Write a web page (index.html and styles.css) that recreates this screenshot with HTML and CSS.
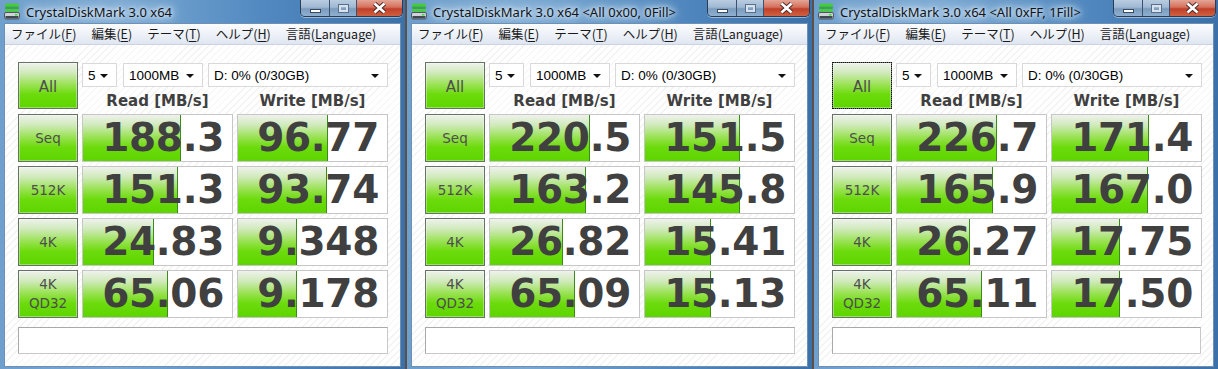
FILE: index.html
```html
<!DOCTYPE html>
<html lang="ja">
<head>
  <meta charset="UTF-8" />
  <title>CrystalDiskMark 3.0 x64</title>
  <link rel="stylesheet" href="styles.css">
</head>
<body>
  <div class="desk">

    <!-- window 1 : random data -->
    <div class="win">
      <div class="titlebar">
        <svg class="app-icon" width="17" height="17" viewBox="0 0 17 17">
          <rect x="1" y="0.5" width="14" height="2.4" rx="1" fill="#45cc3a"/>
          <rect x="1" y="3.5" width="14" height="2.4" rx="1" fill="#2fae2a"/>
          <rect x="1" y="6.5" width="14" height="2.2" rx="1" fill="#45cc3a"/>
          <rect x="0.5" y="9.5" width="15" height="6.5" rx="1.5" fill="#cfd3d8" stroke="#4d555e"/>
          <rect x="1.5" y="13" width="13" height="2.5" fill="#3f4750"/>
          <rect x="11" y="11" width="2.5" height="1.5" fill="#33dd33"/>
        </svg>
        <span class="title">CrystalDiskMark 3.0 x64</span>
        <div class="caps">
          <span class="cap min"><i></i></span>
          <span class="cap max"><i></i></span>
          <span class="cap close">
            <svg width="15" height="12" viewBox="0 0 15 12"><path d="M2.5 1.5 L12.5 10.5 M12.5 1.5 L2.5 10.5" stroke="#4a2424" stroke-width="4.4"/><path d="M2.5 1.5 L12.5 10.5 M12.5 1.5 L2.5 10.5" stroke="#fff" stroke-width="2.6"/></svg>
          </span>
        </div>
      </div>
      <div class="client">
        <div class="menubar">
          <span>ファイル(<u>F</u>)</span>
          <span>編集(<u>E</u>)</span>
          <span>テーマ(<u>T</u>)</span>
          <span>ヘルプ(<u>H</u>)</span>
          <span>言語(<u>L</u>anguage)</span>
        </div>
        <div class="panel">
          <div class="top">
            <div class="tbtn all">All</div>
            <div class="selects">
              <div class="sel s-count">5</div>
              <div class="sel s-size">1000MB</div>
              <div class="sel s-drive">D: 0% (0/30GB)</div>
            </div>
            <div class="hdr">Read [MB/s]</div>
            <div class="hdr">Write [MB/s]</div>
          </div>
          <div class="rows">
            <div class="tbtn">Seq</div>
            <div class="val" style="--w:98px">188.3</div>
            <div class="val" style="--w:90px">96.77</div>

            <div class="tbtn">512K</div>
            <div class="val" style="--w:95px">151.3</div>
            <div class="val" style="--w:89px">93.74</div>

            <div class="tbtn">4K</div>
            <div class="val" style="--w:71px">24.83</div>
            <div class="val" style="--w:59px">9.348</div>

            <div class="tbtn two">4K<br>QD32</div>
            <div class="val" style="--w:85px">65.06</div>
            <div class="val" style="--w:59px">9.178</div>
          </div>
          <div class="comment"></div>
        </div>
      </div>
    </div>

    <!-- window 2 : 0x00 fill -->
    <div class="win">
      <div class="titlebar">
        <svg class="app-icon" width="17" height="17" viewBox="0 0 17 17">
          <rect x="1" y="0.5" width="14" height="2.4" rx="1" fill="#45cc3a"/>
          <rect x="1" y="3.5" width="14" height="2.4" rx="1" fill="#2fae2a"/>
          <rect x="1" y="6.5" width="14" height="2.2" rx="1" fill="#45cc3a"/>
          <rect x="0.5" y="9.5" width="15" height="6.5" rx="1.5" fill="#cfd3d8" stroke="#4d555e"/>
          <rect x="1.5" y="13" width="13" height="2.5" fill="#3f4750"/>
          <rect x="11" y="11" width="2.5" height="1.5" fill="#33dd33"/>
        </svg>
        <span class="title">CrystalDiskMark 3.0 x64 &lt;All 0x00, 0Fill&gt;</span>
        <div class="caps">
          <span class="cap min"><i></i></span>
          <span class="cap max"><i></i></span>
          <span class="cap close">
            <svg width="15" height="12" viewBox="0 0 15 12"><path d="M2.5 1.5 L12.5 10.5 M12.5 1.5 L2.5 10.5" stroke="#4a2424" stroke-width="4.4"/><path d="M2.5 1.5 L12.5 10.5 M12.5 1.5 L2.5 10.5" stroke="#fff" stroke-width="2.6"/></svg>
          </span>
        </div>
      </div>
      <div class="client">
        <div class="menubar">
          <span>ファイル(<u>F</u>)</span>
          <span>編集(<u>E</u>)</span>
          <span>テーマ(<u>T</u>)</span>
          <span>ヘルプ(<u>H</u>)</span>
          <span>言語(<u>L</u>anguage)</span>
        </div>
        <div class="panel">
          <div class="top">
            <div class="tbtn all">All</div>
            <div class="selects">
              <div class="sel s-count">5</div>
              <div class="sel s-size">1000MB</div>
              <div class="sel s-drive">D: 0% (0/30GB)</div>
            </div>
            <div class="hdr">Read [MB/s]</div>
            <div class="hdr">Write [MB/s]</div>
          </div>
          <div class="rows">
            <div class="tbtn">Seq</div>
            <div class="val" style="--w:100px">220.5</div>
            <div class="val" style="--w:95px">151.5</div>

            <div class="tbtn">512K</div>
            <div class="val" style="--w:96px">163.2</div>
            <div class="val" style="--w:95px">145.8</div>

            <div class="tbtn">4K</div>
            <div class="val" style="--w:73px">26.82</div>
            <div class="val" style="--w:66px">15.41</div>

            <div class="tbtn two">4K<br>QD32</div>
            <div class="val" style="--w:85px">65.09</div>
            <div class="val" style="--w:66px">15.13</div>
          </div>
          <div class="comment"></div>
        </div>
      </div>
    </div>

    <!-- window 3 : 0xFF fill -->
    <div class="win">
      <div class="titlebar">
        <svg class="app-icon" width="17" height="17" viewBox="0 0 17 17">
          <rect x="1" y="0.5" width="14" height="2.4" rx="1" fill="#45cc3a"/>
          <rect x="1" y="3.5" width="14" height="2.4" rx="1" fill="#2fae2a"/>
          <rect x="1" y="6.5" width="14" height="2.2" rx="1" fill="#45cc3a"/>
          <rect x="0.5" y="9.5" width="15" height="6.5" rx="1.5" fill="#cfd3d8" stroke="#4d555e"/>
          <rect x="1.5" y="13" width="13" height="2.5" fill="#3f4750"/>
          <rect x="11" y="11" width="2.5" height="1.5" fill="#33dd33"/>
        </svg>
        <span class="title">CrystalDiskMark 3.0 x64 &lt;All 0xFF, 1Fill&gt;</span>
        <div class="caps">
          <span class="cap min"><i></i></span>
          <span class="cap max"><i></i></span>
          <span class="cap close">
            <svg width="15" height="12" viewBox="0 0 15 12"><path d="M2.5 1.5 L12.5 10.5 M12.5 1.5 L2.5 10.5" stroke="#4a2424" stroke-width="4.4"/><path d="M2.5 1.5 L12.5 10.5 M12.5 1.5 L2.5 10.5" stroke="#fff" stroke-width="2.6"/></svg>
          </span>
        </div>
      </div>
      <div class="client">
        <div class="menubar">
          <span>ファイル(<u>F</u>)</span>
          <span>編集(<u>E</u>)</span>
          <span>テーマ(<u>T</u>)</span>
          <span>ヘルプ(<u>H</u>)</span>
          <span>言語(<u>L</u>anguage)</span>
        </div>
        <div class="panel">
          <div class="top">
            <div class="tbtn all focus">All</div>
            <div class="selects">
              <div class="sel s-count">5</div>
              <div class="sel s-size">1000MB</div>
              <div class="sel s-drive">D: 0% (0/30GB)</div>
            </div>
            <div class="hdr">Read [MB/s]</div>
            <div class="hdr">Write [MB/s]</div>
          </div>
          <div class="rows">
            <div class="tbtn">Seq</div>
            <div class="val" style="--w:100px">226.7</div>
            <div class="val" style="--w:97px">171.4</div>

            <div class="tbtn">512K</div>
            <div class="val" style="--w:96px">165.9</div>
            <div class="val" style="--w:96px">167.0</div>

            <div class="tbtn">4K</div>
            <div class="val" style="--w:73px">26.27</div>
            <div class="val" style="--w:68px">17.75</div>

            <div class="tbtn two">4K<br>QD32</div>
            <div class="val" style="--w:85px">65.11</div>
            <div class="val" style="--w:68px">17.50</div>
          </div>
          <div class="comment"></div>
        </div>
      </div>
    </div>

  </div>
</body>
</html>
```

FILE: styles.css
```css
:root {
  --green: linear-gradient(to bottom, #eef2ec 0%, #d0eabb 22%, #9ae254 48%, #6cdb0c 70%, #5dd500 100%);
  --edge: #3d8a1c;
  --ink: #404040;
}

* {
  box-sizing: border-box;
}

body {
  margin: 0;
  background: #5d5046;
  font-family: "Noto Sans", "Noto Sans CJK JP", sans-serif;
}

.desk {
  display: flex;
  gap: 2px;
  width: 1218px;
  height: 369px;
  overflow: hidden;
}

.win {
  flex: none;
  width: 405px;
  height: 369px;
  padding: 0 4px 2px;
  background: linear-gradient(to right, #6e9fcd 0%, #79a8d3 30%, #5189c0 65%, #3c70a8 100%);
  display: flex;
  flex-direction: column;
}

.win:last-child {
  width: 404px;
}

/* title bar */

.titlebar {
  height: 23px;
  display: flex;
  align-items: center;
  flex: none;
}

.app-icon {
  flex: none;
  margin: 0 3px 1px 0;
}

.title {
  font-size: 13px;
  color: #101418;
  white-space: nowrap;
  padding: 0 2px;
  text-shadow: 0 0 4px #f0f6fb, 0 0 8px #e2edf7, 0 0 12px #d6e6f4, 0 0 16px #cbdff0;
}

.caps {
  align-self: flex-start;
  margin: 0 -2px 0 auto;
  display: flex;
  height: 17px;
  border: 1px solid #2b3d55;
  border-top: none;
  border-radius: 0 0 5px 5px;
  overflow: hidden;
  box-shadow: 0 1px 0 rgba(255, 255, 255, .45);
}

.cap {
  display: flex;
  align-items: center;
  justify-content: center;
  height: 100%;
  background: linear-gradient(to bottom, #b9cde0 0%, #9fb8d2 45%, #7c9cbd 55%, #8eb0d0 100%);
  border-right: 1px solid #3d5270;
}

.cap.min { width: 29px; }
.cap.max { width: 27px; }

.cap.close {
  width: 45px;
  border-right: none;
  background: linear-gradient(to bottom, #e4a596 0%, #d5705c 45%, #c0402a 55%, #cf6040 100%);
}

.cap.min i {
  display: block;
  width: 11px;
  height: 4px;
  margin-top: 6px;
  background: #fff;
  border: 1px solid #3a4a60;
}

.cap.max i {
  display: block;
  width: 11px;
  height: 9px;
  border: 1px solid #5a6f8a;
  box-shadow: inset 0 0 0 2px #d7e2ee;
}

/* client area */

.client {
  flex: 1;
  display: flex;
  flex-direction: column;
  border: 1px solid #6f90b6;
  background: #fff repeating-linear-gradient(135deg, #fff 0 4px, #f3f3f3 4px 5px);
}

.menubar {
  height: 21px;
  flex: none;
  display: flex;
  align-items: center;
  gap: 15px;
  padding: 0 0 1px 6px;
  font-family: "Noto Sans CJK JP", sans-serif;
  font-size: 12.5px;
  color: #1a1a1a;
  background: linear-gradient(to bottom, #fbfcfe 0%, #eef2f8 50%, #dfe6f1 100%);
  border-bottom: 1px solid #c9d3e2;
}

.menubar u {
  text-decoration-thickness: 1px;
  text-underline-offset: 2px;
}

.panel {
  padding: 17px 12px 0 13px;
}

.top {
  display: grid;
  grid-template-columns: 60px 151px 151px;
  grid-template-rows: 25px 22px;
  column-gap: 4px;
}

.top .all {
  grid-row: 1 / 3;
}

.selects {
  grid-column: 2 / 4;
  display: flex;
  padding-top: 1px;
}

.sel {
  position: relative;
  height: 24px;
  padding: 0 0 0 5px;
  display: flex;
  align-items: center;
  font-family: "Liberation Sans", sans-serif;
  font-size: 13.5px;
  color: #000;
  background: #fff;
  border: 1px solid #d9d9d9;
}

.sel::after {
  content: "";
  position: absolute;
  right: 8px;
  top: 10px;
  border-left: 4px solid transparent;
  border-right: 4px solid transparent;
  border-top: 4px solid #111;
}

.s-count { width: 35px; }
.s-size { width: 80px; margin-left: 6px; }
.s-drive { width: 180px; margin-left: 5px; }

.hdr {
  font-family: "DejaVu Sans", sans-serif;
  font-weight: bold;
  font-size: 15px;
  color: var(--ink);
  text-align: center;
  line-height: 18px;
  padding-top: 5px;
}

.rows {
  margin-top: 5px;
  display: grid;
  grid-template-columns: 60px 151px 151px;
  grid-auto-rows: 48px;
  gap: 4px;
}

.tbtn {
  display: flex;
  align-items: center;
  justify-content: center;
  text-align: center;
  font-family: "DejaVu Sans", sans-serif;
  font-size: 13.5px;
  line-height: 19px;
  color: #4e4e4e;
  background: var(--green);
  border: 1px solid #667266;
  box-shadow: inset 0 0 0 1px rgba(255, 255, 255, .35);
}

.tbtn.all {
  font-size: 15px;
  padding-top: 4px;
}

.tbtn.focus {
  outline: 1px dotted #111;
  outline-offset: -1px;
}

.val {
  border: 1px solid #c6c6c6;
  background:
    linear-gradient(var(--edge), var(--edge)) no-repeat calc(var(--w) - 1px) 0 / 1px 100%,
    var(--green) no-repeat 0 0 / var(--w) 100%,
    #fff;
  font-family: "DejaVu Sans", sans-serif;
  font-weight: bold;
  font-size: 39px;
  line-height: 46px;
  color: var(--ink);
  text-align: right;
  padding-right: 8px;
  letter-spacing: -0.3px;
}

.comment {
  margin-top: 9px;
  height: 27px;
  background: #fff;
  border: 1px solid #a9a9a9;
  border-right-color: #c8c8c8;
  border-bottom-color: #c8c8c8;
}
```
